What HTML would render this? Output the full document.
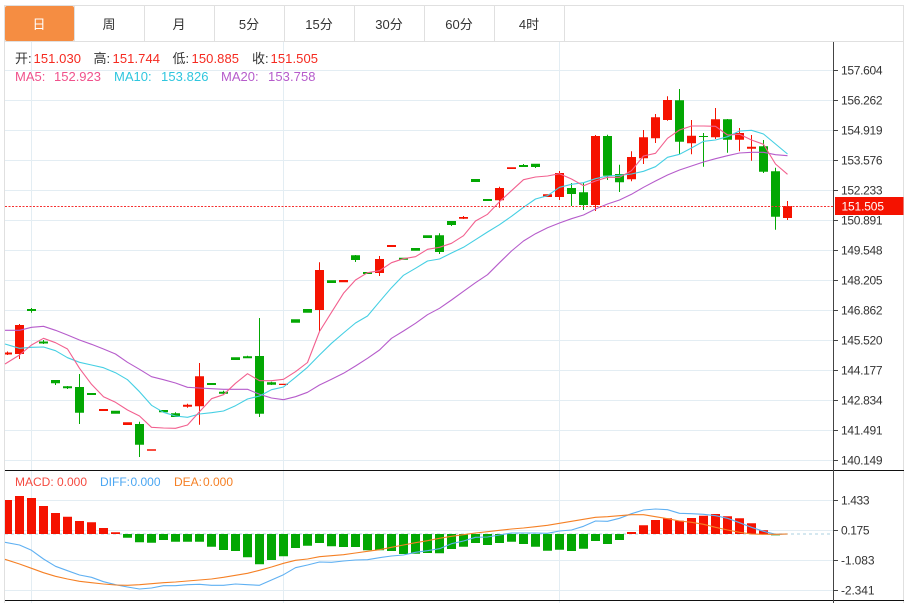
<!DOCTYPE html>
<html lang="zh">
<head>
<meta charset="utf-8">
<title>K线图</title>
<style>
html,body{margin:0;padding:0;background:#fff;width:906px;height:603px;overflow:hidden}
svg{display:block}
text{font-family:"Liberation Sans","Noto Sans CJK SC",sans-serif}
</style>
</head>
<body>
<svg width="906" height="603" viewBox="0 0 906 603" xmlns="http://www.w3.org/2000/svg">
<!-- frame -->
<g fill="#e0e0e0">
<rect x="4" y="5" width="900" height="1"/>
<rect x="4" y="41" width="900" height="1"/>
<rect x="4" y="5" width="1" height="598"/>
<rect x="903" y="5" width="1" height="598"/>
<rect x="74" y="6" width="1" height="35"/>
<rect x="144" y="6" width="1" height="35"/>
<rect x="214" y="6" width="1" height="35"/>
<rect x="284" y="6" width="1" height="35"/>
<rect x="354" y="6" width="1" height="35"/>
<rect x="424" y="6" width="1" height="35"/>
<rect x="494" y="6" width="1" height="35"/>
<rect x="564" y="6" width="1" height="35"/>
</g>
<rect x="5" y="6" width="69" height="35" rx="2" fill="#f58d42"/>
<g font-size="13" fill="#333" text-anchor="middle">
<text x="39" y="29" fill="#fff">日</text>
<text x="109" y="29">周</text>
<text x="179" y="29">月</text>
<text x="249" y="29">5分</text>
<text x="319" y="29">15分</text>
<text x="389" y="29">30分</text>
<text x="459" y="29">60分</text>
<text x="529" y="29">4时</text>
</g>
<!-- grid -->
<path d="M5 70.5H833M5 100.5H833M5 130.5H833M5 160.5H833M5 190.5H833M5 220.5H833M5 250.5H833M5 280.5H833M5 310.5H833M5 340.5H833M5 370.5H833M5 400.5H833M5 430.5H833M5 460.5H833M5 500.5H833M5 530.5H833M5 560.5H833M5 590.5H833M31.5 42V603M283.5 42V603M559.5 42V603" stroke="#e3edf3" stroke-width="1" fill="none"/>
<!-- candles -->
<path stroke="#f51200" fill="none" d="M7.5 351.5V355M19.5 324V359M187.5 403.7V407.7M199.5 363V424.7M319.5 262.3V331M379.5 256V276M463.5 216V219M499.5 186.7V207.7M559.5 171V200M595.5 135V211M631.5 151.3V181.3M643.5 130V164M655.5 114V143M667.5 96.3V120.7M691.5 120V154.3M715.5 108V139M739.5 128V151.3M751.5 135V160.7M787.5 201V220"/>
<path stroke="#03a703" fill="none" d="M31.5 308V312.7M43.5 340V344M55.5 380V385M67.5 386V389M79.5 374V424M139.5 421.7V457M175.5 412.3V417M223.5 390.7V394M247.5 355.7V358M259.5 318V417M271.5 381.7V385M355.5 255V262M439.5 233.3V254M451.5 221V226M523.5 164V167M535.5 164V168M571.5 183V206M583.5 183V210M607.5 134.7V180M619.5 164.7V192M679.5 89V154M703.5 133V166.7M727.5 119V152.7M763.5 140V173M775.5 167.7V229.7"/>
<path fill="#f51200" d="M5 352.5h7v2h-7zM15 325h9v29h-9zM99 409h9v2h-9zM123 422.3h9v2.7h-9zM147 449.3h9v1.4h-9zM183 404.7h9v2h-9zM195 376.3h9v30h-9zM279 383.7h9v1.3h-9zM315 270h9v40h-9zM339 280h9v2.3h-9zM375 259h9v14h-9zM387 245h9v2h-9zM459 217h9v1.7h-9zM495 188h9v12.3h-9zM507 167.3h9v1.7h-9zM543 194.3h9v2.7h-9zM555 173h9v24h-9zM591 136h9v69h-9zM627 157h9v22.3h-9zM639 137.3h9v21h-9zM651 117.3h9v21h-9zM663 100h9v20h-9zM687 135.7h9v7.6h-9zM711 119.3h9v18h-9zM735 133h9v6.7h-9zM747 146.7h9v2h-9zM783 206h9v12h-9z"/>
<path fill="#03a703" d="M27 309h9v2h-9zM39 341.5h9v2h-9zM51 380h9v3.3h-9zM63 386.3h9v2h-9zM75 387h9v25.7h-9zM87 393h9v2h-9zM111 410.7h9v3h-9zM135 424h9v20.7h-9zM159 410h9v2.3h-9zM171 413.3h9v3.7h-9zM207 383h9v2h-9zM219 391.7h9v2h-9zM231 357.3h9v2.7h-9zM243 356.3h9v2h-9zM255 356h9v57.7h-9zM267 382.3h9v2.4h-9zM291 319.3h9v3.4h-9zM303 309h9v3.7h-9zM327 280.3h9v2.7h-9zM351 255.3h9v4.7h-9zM363 272h9v2h-9zM399 257.7h9v2h-9zM411 248h9v2.7h-9zM423 235.3h9v2.7h-9zM435 235.3h9v16.7h-9zM447 221h9v4h-9zM471 179h9v3h-9zM483 199h9v2h-9zM519 165h9v2h-9zM531 163.7h9v3.3h-9zM567 188h9v6h-9zM579 192.3h9v12.7h-9zM603 136h9v39.7h-9zM615 174h9v8.3h-9zM675 100.3h9v41.4h-9zM699 136h9v1h-9zM723 119.3h9v20.4h-9zM759 146.3h9v25.4h-9zM771 171.3h9v45.4h-9z"/>
<!-- MA lines -->
<g fill="none" stroke-width="1.1" stroke-linejoin="round">
<polyline stroke="#b65ccb" points="5,330.3 19.5,330.3 31.5,327.3 43.5,326.3 55.5,330.3 67.5,335 79.5,340 91.5,344.3 103.5,349 115.5,354 127.5,362.3 139.5,369.3 151.5,376.7 163.5,379.7 175.5,383 187.5,387.3 199.5,388 211.5,388.7 223.5,389.3 235.5,389.3 247.5,389.3 259.5,394.3 271.5,398 283.5,399.7 295.5,396.7 307.5,392.3 319.5,385 331.5,379.3 343.5,373.3 355.5,366 367.5,358.3 379.5,350 391.5,338.3 403.5,331 415.5,323.3 427.5,314.7 439.5,308.3 451.5,300 463.5,291.3 475.5,282.7 487.5,274.7 499.5,262.7 511.5,251 523.5,241 535.5,233.7 547.5,227.7 559.5,223 571.5,218.7 583.5,215 595.5,209 607.5,204 619.5,200 631.5,194.3 643.5,187.3 655.5,181 667.5,175 679.5,170 691.5,166 703.5,162 715.5,158.7 727.5,155.7 739.5,153 751.5,152.3 763.5,152.3 775.5,154.7 787.5,155.7"/>
<polyline stroke="#45cfe3" points="5,344 19.5,348.3 31.5,347.3 43.5,347 55.5,350.7 67.5,357.7 79.5,362.3 91.5,365 103.5,367.7 115.5,372.7 127.5,379.7 139.5,391.7 151.5,405.3 163.5,412.3 175.5,416 187.5,417.3 199.5,414 211.5,412.7 223.5,411 235.5,405.7 247.5,399 259.5,396 271.5,389.7 283.5,387 295.5,377.3 307.5,367.3 319.5,355 331.5,343.3 343.5,333 355.5,323 367.5,316 379.5,301.7 391.5,287.7 403.5,275.3 415.5,268.3 427.5,261 439.5,259 451.5,253 463.5,247.3 475.5,239.7 487.5,232 499.5,224.7 511.5,216.3 523.5,207.3 535.5,199 547.5,195.7 559.5,187.3 571.5,184.3 583.5,182.7 595.5,178.7 607.5,176 619.5,175.3 631.5,174 643.5,171.3 655.5,166.7 667.5,157.3 679.5,154.3 691.5,148 703.5,141.3 715.5,140 727.5,136.7 739.5,131 751.5,130.3 763.5,134 775.5,144 787.5,154"/>
<polyline stroke="#f2608f" points="5,364 19.5,355 31.5,345 43.5,338.3 55.5,342.7 67.5,349 79.5,368.3 91.5,384.3 103.5,396.7 115.5,402.3 127.5,410 139.5,416 151.5,427.3 163.5,428 175.5,428.3 187.5,425 199.5,411.7 211.5,398.7 223.5,394.7 235.5,383.3 247.5,373.7 259.5,380.7 271.5,380.7 283.5,379.3 295.5,371.7 307.5,362.5 319.5,331.5 331.5,312.3 343.5,293.3 355.5,280 367.5,272.7 379.5,270.7 391.5,262.7 403.5,258.7 415.5,256.7 427.5,249.3 439.5,247.3 451.5,243.3 463.5,235.7 475.5,221 487.5,214.3 499.5,201.7 511.5,190.7 523.5,179.7 535.5,177 547.5,176 559.5,173.7 571.5,179 583.5,185.7 595.5,181 607.5,177.3 619.5,177.3 631.5,170.7 643.5,156 655.5,153.3 667.5,138.3 679.5,130 691.5,126 703.5,126 715.5,126.3 727.5,135 739.5,134.3 751.5,140 763.5,144.3 775.5,164 787.5,174.3"/>
</g>
<!-- last price line -->
<line x1="5" y1="206.5" x2="833" y2="206.5" stroke="#f53030" stroke-width="1" stroke-dasharray="2 1.5"/>
<!-- MACD -->
<line x1="5" y1="534" x2="831" y2="534" stroke="#bcdbe8" stroke-width="1.2" stroke-dasharray="3 3"/>
<path fill="#f51200" d="M5 500h7V534h-7zM15 496h9V534h-9zM27 498h9V534h-9zM39 506h9V534h-9zM51 513h9V534h-9zM63 516.7h9V534h-9zM75 521h9V534h-9zM87 522.3h9V534h-9zM99 528h9V534h-9zM111 532.3h9V534h-9zM627 532h9V534h-9zM639 525.3h9V534h-9zM651 520h9V534h-9zM663 518.3h9V534h-9zM675 520.7h9V534h-9zM687 518h9V534h-9zM699 515.7h9V534h-9zM711 514h9V534h-9zM723 516.3h9V534h-9zM735 518.3h9V534h-9zM747 523.3h9V534h-9zM759 530.3h9V534h-9z"/>
<path fill="#03a703" d="M123 534h9V537.7h-9zM135 534h9V542.3h-9zM147 534h9V542.7h-9zM159 534h9V540h-9zM171 534h9V541.7h-9zM183 534h9V541.7h-9zM195 534h9V541.7h-9zM207 534h9V546.7h-9zM219 534h9V550h-9zM231 534h9V551h-9zM243 534h9V557.3h-9zM255 534h9V564.3h-9zM267 534h9V560h-9zM279 534h9V556.3h-9zM291 534h9V548h-9zM303 534h9V545.7h-9zM315 534h9V543h-9zM327 534h9V546.3h-9zM339 534h9V547h-9zM351 534h9V547h-9zM363 534h9V550.3h-9zM375 534h9V550.3h-9zM387 534h9V551h-9zM399 534h9V554h-9zM411 534h9V553.7h-9zM423 534h9V553h-9zM435 534h9V553.3h-9zM447 534h9V549h-9zM459 534h9V546.7h-9zM471 534h9V543h-9zM483 534h9V545h-9zM495 534h9V543h-9zM507 534h9V541.7h-9zM519 534h9V544h-9zM531 534h9V546.7h-9zM543 534h9V550.7h-9zM555 534h9V549.7h-9zM567 534h9V551h-9zM579 534h9V548.7h-9zM591 534h9V541h-9zM603 534h9V544h-9zM615 534h9V540h-9z"/>
<rect x="771" y="534" width="9" height="1.7" fill="#8fd09a"/>
<g fill="none" stroke-width="1.1" stroke-linejoin="round">
<polyline stroke="#5fb0f2" points="5,542.3 19.5,545 31.5,550.3 43.5,559 55.5,566.3 67.5,570.7 79.5,575 91.5,577.3 103.5,581.7 115.5,584.7 127.5,587 139.5,589 151.5,588 163.5,585.7 175.5,585.7 187.5,584.7 199.5,584.3 211.5,585.3 223.5,585.3 235.5,584 247.5,584.7 259.5,585.3 271.5,580 283.5,574.7 295.5,567.7 307.5,565 319.5,562 331.5,562.3 343.5,561 355.5,560 367.5,559.7 379.5,557.7 391.5,556 403.5,555 415.5,552.3 427.5,550.7 439.5,548.7 451.5,543.7 463.5,541 475.5,537.3 487.5,537 499.5,535 511.5,533 523.5,533 535.5,533 547.5,533.3 559.5,531 571.5,530 583.5,526.3 595.5,521 607.5,521.3 619.5,518.3 631.5,513.7 643.5,510 655.5,509 667.5,509.7 679.5,513.3 691.5,513.7 703.5,514.3 715.5,515.7 727.5,518.3 739.5,522.7 751.5,527.3 763.5,531.3 775.5,534.3 787.5,534"/>
<polyline stroke="#f58025" points="5,559.3 19.5,564 31.5,568.3 43.5,572.7 55.5,576.3 67.5,579 79.5,581.3 91.5,582.7 103.5,584 115.5,585 127.5,585.3 139.5,584.7 151.5,583.7 163.5,582.7 175.5,582 187.5,581 199.5,580 211.5,579 223.5,577.3 235.5,575.3 247.5,573.3 259.5,570.3 271.5,567 283.5,563.3 295.5,560.3 307.5,559 319.5,556.7 331.5,555.7 343.5,554.7 355.5,553 367.5,551.3 379.5,549.7 391.5,547.3 403.5,545 415.5,542.7 427.5,540.7 439.5,538.3 451.5,536.3 463.5,534.7 475.5,533 487.5,531.7 499.5,530.3 511.5,529 523.5,528 535.5,526.7 547.5,525.3 559.5,523.3 571.5,521.3 583.5,519.3 595.5,517.3 607.5,516.7 619.5,515.7 631.5,514.7 643.5,514.7 655.5,516.7 667.5,518.7 679.5,521 691.5,522.3 703.5,524.3 715.5,527.3 727.5,530 739.5,532.3 751.5,534 763.5,534.3 775.5,534.3 787.5,534"/>
</g>
<!-- axes -->
<path d="M5 470.5H904M5 600.5H904" stroke="#111" stroke-width="1"/>
<path d="M833.5 42V603" stroke="#444" stroke-width="1"/>
<path d="M833 70.5h5M833 100.5h5M833 130.5h5M833 160.5h5M833 190.5h5M833 220.5h5M833 250.5h5M833 280.5h5M833 310.5h5M833 340.5h5M833 370.5h5M833 400.5h5M833 430.5h5M833 460.5h5M833 500.5h5M833 530.5h5M833 560.5h5M833 590.5h5" stroke="#444" stroke-width="1"/>
<g font-size="12" fill="#333">
<text x="841" y="74.5" textLength="41.5">157.604</text>
<text x="841" y="104.5" textLength="41.5">156.262</text>
<text x="841" y="134.5" textLength="41.5">154.919</text>
<text x="841" y="164.5" textLength="41.5">153.576</text>
<text x="841" y="194.5" textLength="41.5">152.233</text>
<text x="841" y="224.5" textLength="41.5">150.891</text>
<text x="841" y="254.5" textLength="41.5">149.548</text>
<text x="841" y="284.5" textLength="41.5">148.205</text>
<text x="841" y="314.5" textLength="41.5">146.862</text>
<text x="841" y="344.5" textLength="41.5">145.520</text>
<text x="841" y="374.5" textLength="41.5">144.177</text>
<text x="841" y="404.5" textLength="41.5">142.834</text>
<text x="841" y="434.5" textLength="41.5">141.491</text>
<text x="841" y="464.5" textLength="41.5">140.149</text>
<text x="841" y="504.5" textLength="28.5">1.433</text>
<text x="841" y="534.5" textLength="28.5">0.175</text>
<text x="841" y="564.5" textLength="33.5">-1.083</text>
<text x="841" y="594.5" textLength="33.5">-2.341</text>
</g>
<rect x="835" y="197" width="68.5" height="18" fill="#f51200"/>
<text x="841.5" y="210.5" font-size="12" fill="#fff" textLength="42.5">151.505</text>
<!-- legends -->
<g font-size="13">
<g fill="#333">
<text x="15" y="63">开:</text>
<text x="93.5" y="63">高:</text>
<text x="172.5" y="63">低:</text>
<text x="252" y="63">收:</text>
</g>
<g fill="#f52a20">
<text x="33.5" y="63" textLength="47.5">151.030</text>
<text x="112.5" y="63" textLength="47.5">151.744</text>
<text x="191.5" y="63" textLength="47.5">150.885</text>
<text x="270.5" y="63" textLength="47.5">151.505</text>
</g>
<g fill="#f0528c">
<text x="15" y="81">MA5:</text>
<text x="54" y="81" textLength="47">152.923</text>
</g>
<g fill="#2fc6de">
<text x="114" y="81">MA10:</text>
<text x="161" y="81" textLength="47.5">153.826</text>
</g>
<g fill="#b65ccb">
<text x="221" y="81">MA20:</text>
<text x="268" y="81" textLength="47.5">153.758</text>
</g>
</g>
<g font-size="12">
<g fill="#f54a40">
<text x="15" y="486">MACD:</text>
<text x="57" y="486">0.000</text>
</g>
<g fill="#4aa6f2">
<text x="100" y="486">DIFF:</text>
<text x="130.5" y="486">0.000</text>
</g>
<g fill="#f58025">
<text x="174" y="486">DEA:</text>
<text x="203" y="486">0.000</text>
</g>
</g>
</svg>
</body>
</html>
